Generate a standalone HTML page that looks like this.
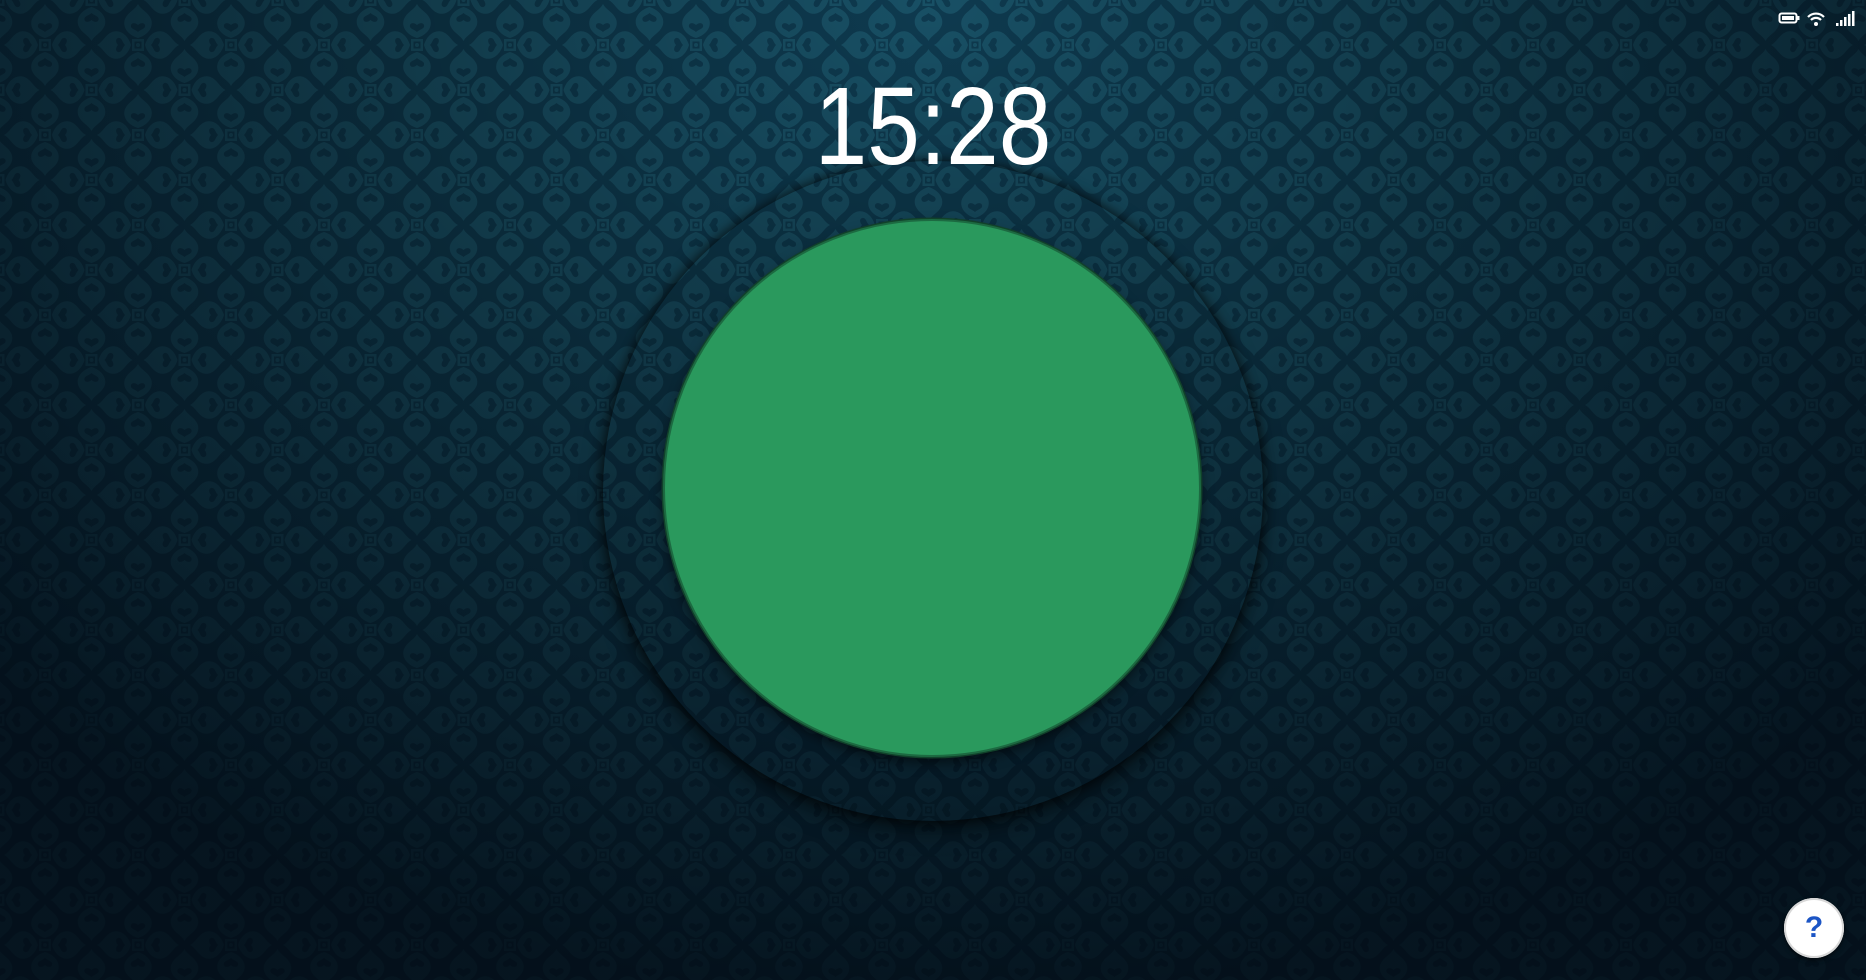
<!DOCTYPE html>
<html><head><meta charset="utf-8"><style>
html,body{margin:0;padding:0;width:1866px;height:980px;overflow:hidden;background:#06131f;}
#bg{position:absolute;left:0;top:0;}
.vig{position:absolute;left:0;top:0;width:1866px;height:980px;background:radial-gradient(ellipse 1300px 1000px at 933px 0px,rgba(0,0,0,0) 0%,rgba(0,0,0,0.28) 40%,rgba(1,6,14,0.8) 100%);}
.ring{position:absolute;left:603px;top:161px;width:660px;height:660px;border-radius:50%;box-shadow:0 0 10px 2px rgba(0,0,0,0.55),0 10px 22px rgba(0,0,0,0.5);background:rgba(0,0,0,0.04);}
.green{position:absolute;left:663px;top:219px;width:538px;height:538px;border-radius:50%;background:#2a995d;box-sizing:border-box;border:2px solid #1c6a41;box-shadow:0 0 0 1.5px #11402a,0 6px 12px rgba(0,0,0,0.55);}
.time{position:absolute;left:0;width:1866px;top:67px;text-align:center;color:#fff;font-family:"Liberation Sans",sans-serif;font-size:110px;line-height:120px;transform:scaleX(0.86);transform-origin:933px 0;}
.help{position:absolute;left:1784px;top:898px;width:60px;height:60px;border-radius:50%;background:#fff;box-shadow:inset 0 0 0 2px #d8d8d8,0 2px 4px rgba(0,0,0,0.6);text-align:center;line-height:60px;color:#1c55c5;font-family:"Liberation Sans",sans-serif;font-weight:bold;font-size:30px;}
</style></head><body>
<svg id="bg" width="1866" height="980">
<defs>
<g id="arm"><path d="M0,-7 C-10,-10 -16,-18 -13,-26 C-10,-33 -3,-35 0,-41 C3,-35 10,-33 13,-26 C16,-18 10,-10 0,-7Z" fill="#185065"/>
<path d="M0,-13 C-3,-16 -8,-16 -7,-20 C-6,-23 -2,-22 0,-20 C2,-22 6,-23 7,-20 C8,-16 3,-16 0,-13Z" fill="#0e3a4f"/></g>
<g id="motif"><use href="#arm"/><use href="#arm" transform="rotate(90)"/><use href="#arm" transform="rotate(180)"/><use href="#arm" transform="rotate(270)"/>
<rect x="-6" y="-6" width="12" height="12" fill="#185065"/><rect x="-3.5" y="-3.5" width="7" height="7" fill="#0e3a4f"/><circle r="2" fill="#185065"/></g>
<pattern id="p" width="93" height="90" patternUnits="userSpaceOnUse" patternTransform="translate(-1.5,0)">
<rect width="93" height="90" fill="#0e3a4f"/>
<use href="#motif" x="0" y="0"/><use href="#motif" x="93" y="0"/><use href="#motif" x="0" y="90"/><use href="#motif" x="93" y="90"/><use href="#motif" x="46.5" y="45"/>
</pattern>
</defs>
<rect width="1866" height="980" fill="url(#p)"/>
</svg>
<div class="vig"></div>
<div class="ring"></div>
<div class="green"></div>
<div class="time">15:28</div>
<svg style="position:absolute;left:1778px;top:10px" width="80" height="18">
<rect x="1.5" y="3.5" width="17" height="9" rx="2" fill="none" stroke="#fff" stroke-width="2"/><rect x="4" y="6" width="12" height="4" fill="#fff"/><rect x="19.5" y="6" width="2" height="4" fill="#fff"/>
<path d="M30,7 A11,11 0 0 1 46,7" fill="none" stroke="#fff" stroke-width="2.2"/><path d="M33,10 A7,7 0 0 1 43,10" fill="none" stroke="#fff" stroke-width="2.2"/><circle cx="38" cy="14" r="2" fill="#fff"/>
<rect x="58" y="13" width="2.5" height="3" fill="#fff"/><rect x="62" y="10" width="2.5" height="6" fill="#fff"/><rect x="66" y="7" width="2.5" height="9" fill="#fff"/><rect x="70" y="4" width="2.5" height="12" fill="#fff"/><rect x="74" y="1" width="2.5" height="15" fill="#fff"/>
</svg>
<div class="help">?</div>
</body></html>
